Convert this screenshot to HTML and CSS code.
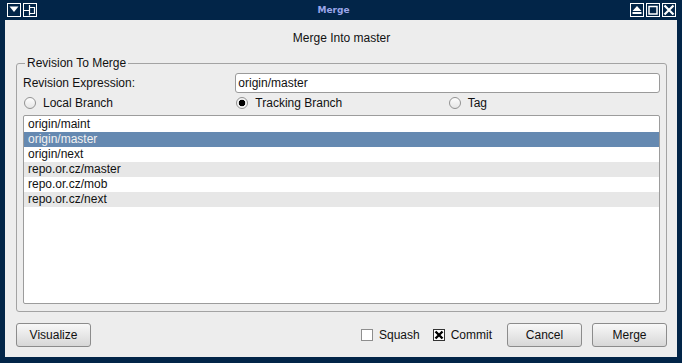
FILE: index.html
```html
<!DOCTYPE html>
<html lang="en">
<head>
    <meta charset="UTF-8">
    <title>Merge</title>
    <link rel="stylesheet" href="styles.css">
</head>
<body>
    <div class="window">
        <div class="titlebar">
            <span class="tbtn"><svg viewBox="0 0 12 12"><path d="M1.5 2.5H10.5L6 8Z" fill="#fff"/></svg></span>
            <span class="tbtn"><svg viewBox="0 0 12 12"><path d="M0 6.5H5M5.5 1V11.5M6 3.5H10.5V9.5H6" stroke="#fff" stroke-width="1.2" fill="none"/></svg></span>
            <span class="title">Merge</span>
            <span class="tbtn"><svg viewBox="0 0 12 12"><path d="M6 2L10.5 7H1.5Z M1.5 8H10.5V10H1.5Z" fill="#fff"/></svg></span>
            <span class="tbtn"><svg viewBox="0 0 12 12"><path d="M2 2.5H10V10H2Z" stroke="#fff" stroke-width="1.5" fill="none"/></svg></span>
            <span class="tbtn"><svg viewBox="0 0 12 12"><path d="M1.5 1.5L10.5 10.5M10.5 1.5L1.5 10.5" stroke="#fff" stroke-width="2.2"/></svg></span>
        </div>
        <div class="content">
            <div class="heading">Merge Into master</div>
            <fieldset class="group">
                <legend>Revision To Merge</legend>
                <div class="grid">
                    <label class="expr-label">Revision Expression:</label>
                    <input class="expr" type="text" value="origin/master">
                    <label class="option"><span class="radio"></span>Local Branch</label>
                    <label class="option"><span class="radio on"></span>Tracking Branch</label>
                    <label class="option"><span class="radio"></span>Tag</label>
                </div>
                <ul class="branches">
                    <li>origin/maint</li>
                    <li class="selected">origin/master</li>
                    <li>origin/next</li>
                    <li>repo.or.cz/master</li>
                    <li>repo.or.cz/mob</li>
                    <li>repo.or.cz/next</li>
                </ul>
            </fieldset>
            <div class="actions">
                <button class="btn">Visualize</button>
                <label class="check squash"><span class="box"></span>Squash</label>
                <label class="check commit"><span class="box on"><svg viewBox="0 0 10 10"><path d="M1.5 1.5L8.5 8.5M8.5 1.5L1.5 8.5" stroke="#000" stroke-width="2.4"/></svg></span>Commit</label>
                <button class="btn cancel">Cancel</button>
                <button class="btn merge">Merge</button>
            </div>
        </div>
    </div>
</body>
</html>
```

FILE: styles.css
```css
* {
    box-sizing: border-box;
}
body {
    margin: 0;
    font-family: "Liberation Sans", Arial, sans-serif;
    font-size: 12px;
    color: #111;
}
.window {
    width: 682px;
    height: 363px;
    background: #022548;
    display: flex;
    flex-direction: column;
}
.titlebar {
    height: 20px;
    display: flex;
    align-items: center;
    gap: 2px;
    padding: 0 6px 0 7px;
}
.tbtn {
    width: 14px;
    height: 14px;
    border: 1px solid #fff;
    display: flex;
}
.tbtn svg {
    width: 12px;
    height: 12px;
}
.title {
    flex: 1;
    text-align: center;
    font: bold 9px "DejaVu Sans", sans-serif;
    color: #9ba6ea;
}
.content {
    flex: 1;
    margin: 0 5px 6px;
    padding: 0 10px 0 11px;
    background: #ededed;
    display: flex;
    flex-direction: column;
}
.heading {
    padding-top: 10px;
    line-height: 16px;
    text-align: center;
}
.group {
    margin: 10px 0 0;
    padding: 3px 6px 7px;
    border: 1px solid #a3a3a3;
    border-radius: 3px;
    min-width: 0;
}
.group legend {
    margin-left: 2px;
    padding: 0 2px;
    line-height: 14px;
}
.grid {
    display: grid;
    grid-template-columns: repeat(3, 1fr);
}
.expr-label {
    display: flex;
    align-items: center;
}
.expr {
    grid-column: 2 / 4;
    height: 20px;
    margin: 0;
    padding: 0 2px;
    border: 1px solid #9a9a9a;
    border-radius: 3px;
    background: #fff;
    font: inherit;
    color: inherit;
}
.option {
    height: 20px;
    display: flex;
    align-items: center;
    gap: 7px;
    padding-left: 1px;
}
.radio {
    width: 12px;
    height: 12px;
    border: 1px solid #929292;
    border-radius: 50%;
    background: linear-gradient(#fdfdfd, #e6e6e6);
}
.radio.on {
    background: radial-gradient(circle, #000 0 3px, #f4f4f4 3.6px);
}
.branches {
    list-style: none;
    margin: 2px 0 0;
    padding: 1px 0;
    height: 189px;
    background: #fff;
    border: 1px solid #9c9c9c;
    border-radius: 2px;
}
.branches li {
    height: 15px;
    line-height: 15px;
    padding-left: 4px;
}
.branches li:nth-child(even) {
    background: #e7e7e7;
}
.branches li.selected {
    background: #6589b1;
    color: #f2f2f2;
}
.actions {
    margin-top: 11px;
    display: flex;
    align-items: center;
}
.btn {
    width: 75px;
    height: 24px;
    margin: 0;
    padding: 0;
    border: 1px solid #8c8c8c;
    border-radius: 3px;
    background: linear-gradient(#f8f8f8, #d7d7d7);
    font: inherit;
    color: inherit;
}
.check {
    display: flex;
    align-items: center;
    gap: 6px;
}
.squash {
    margin-left: auto;
}
.commit {
    margin-left: 13px;
}
.box {
    width: 12px;
    height: 12px;
    border: 1px solid #8e8e8e;
    background: #fff;
    display: flex;
}
.box.on {
    border-color: #333;
}
.box svg {
    width: 10px;
    height: 10px;
}
.cancel {
    margin-left: 15px;
}
.merge {
    margin-left: 10px;
}
```
